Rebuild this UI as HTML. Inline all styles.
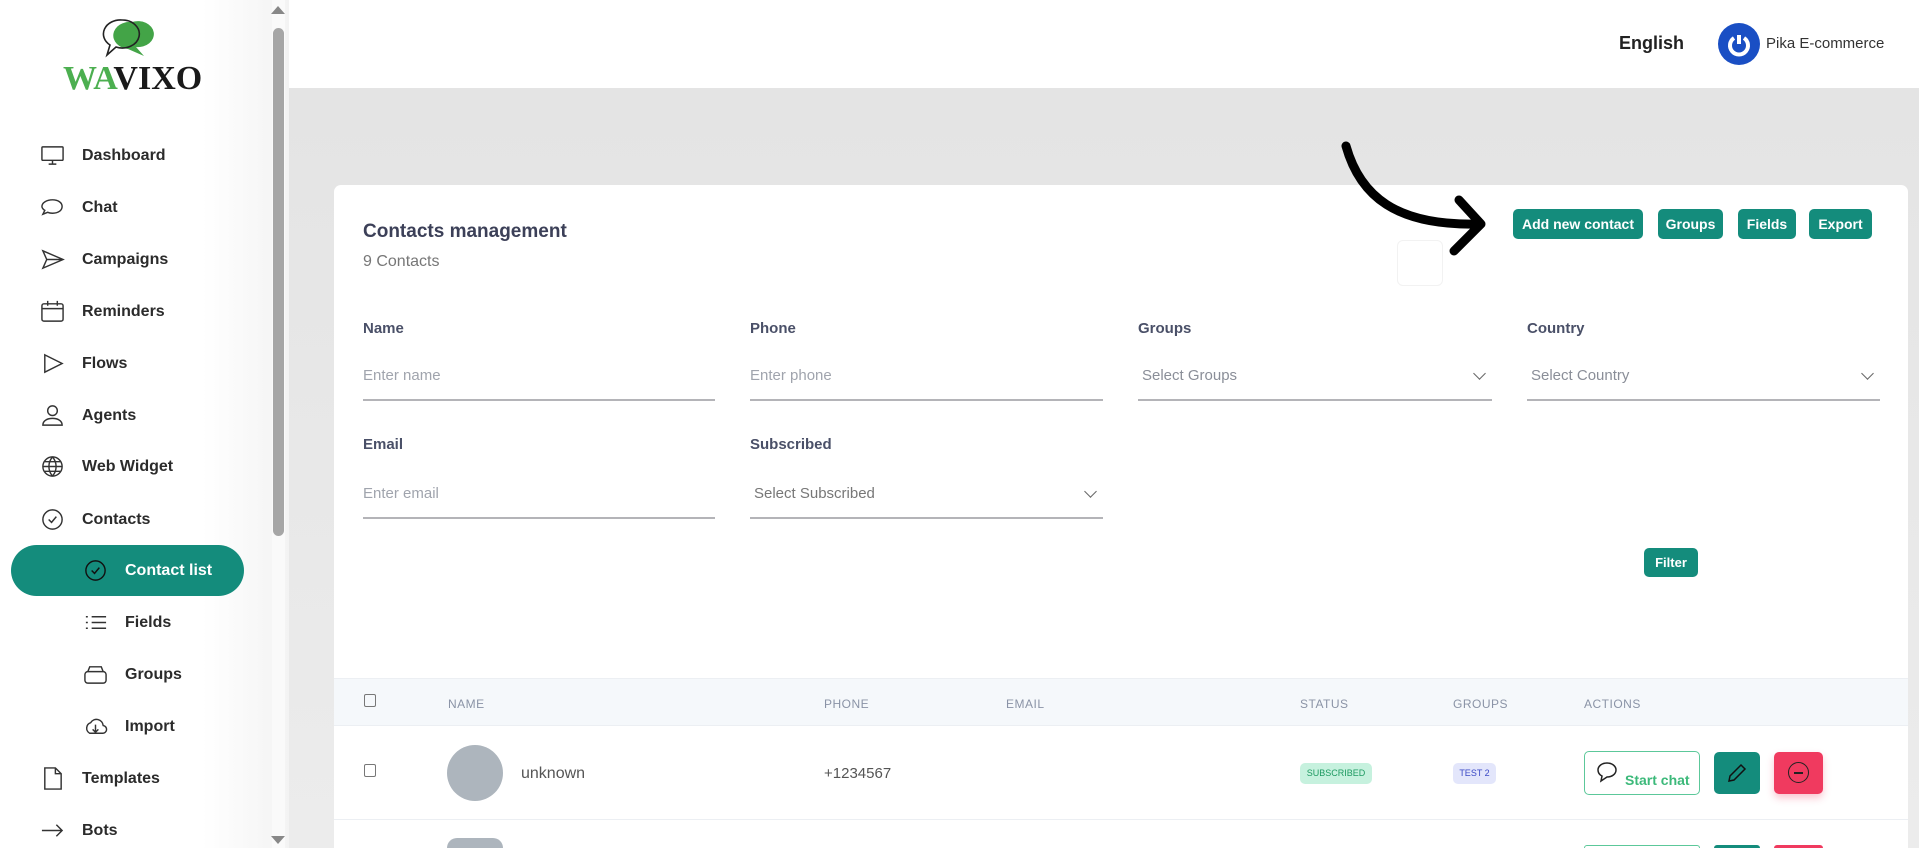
<!DOCTYPE html>
<html style="overflow:hidden;height:848px"><head><meta charset="utf-8"><style>
*{box-sizing:border-box;margin:0;padding:0}
body{width:1919px;height:848px;overflow:hidden;font-family:"Liberation Sans",sans-serif;background:#fff;position:relative}
#wrap{position:absolute;left:0;top:0;width:1919px;height:848px;overflow:hidden}
.abs{position:absolute}
#side{left:0;top:0;width:289px;height:848px;background:linear-gradient(90deg,#fff 70%,#f3f3f3);}
.nav{position:absolute;left:40px;font-size:16px;font-weight:bold;color:#2b2b2b;display:flex;align-items:center}
.nav svg{width:25px;height:25px;margin-right:17px;fill:none;stroke:#333;stroke-width:1.5}
.sub{left:83px}
#main{left:289px;top:88px;width:1630px;height:760px;background:linear-gradient(180deg,#e4e4e4,#ececec)}
#card{left:334px;top:185px;width:1574px;height:680px;background:#fff;border-radius:7px}
.btn{position:absolute;background:#148c7c;color:#fff;font-size:14px;font-weight:bold;border-radius:5px;text-align:center;line-height:30px;height:30px;top:209px}
.lbl{position:absolute;font-size:15px;color:#4a5068;font-weight:bold}
.inp{position:absolute;font-size:15px;color:#a0a4ad;border-bottom:2px solid #b4b4b8;height:44px;padding-top:10px}
.chev{position:absolute;right:8px;top:12px;width:9px;height:9px;border-right:1.5px solid #666;border-bottom:1.5px solid #666;transform:rotate(45deg)}
.th{position:absolute;top:697px;font-size:12px;color:#8a93a6;letter-spacing:.5px}
</style></head><body><div id="wrap">
<div id="side" class="abs">
<svg class="abs" style="left:96px;top:16px" width="70" height="50" viewBox="0 0 70 50"><path d="M36 6 a16 13 0 1 1 4 25 l8 9 -16-7 a16 13 0 0 1 4-27z" fill="#43a447"/><path d="M26 4 a17 14 0 1 1 -6 27 l-9 8 3-10 a17 14 0 0 1 12-25z" fill="none" stroke="#222" stroke-width="1.6"/></svg>
<div class="abs" style="left:63px;top:60px;font-family:'Liberation Serif',serif;font-size:34px;font-weight:bold"><span style="color:#4caf50">WA</span><span style="color:#1a1a1a">VIXO</span></div>
<div class="nav" style="top:143px"><svg viewBox="0 0 26 26"><rect x="2" y="4" width="22" height="14" rx="1"/><path d="M9 22h8M13 18v4"/></svg>Dashboard</div>
<div class="nav" style="top:195px"><svg viewBox="0 0 26 26"><path d="M13 5c6 0 10 3 10 7s-4 7-10 7c-2 0-3 0-5-1l-5 2 2-4c-2-1-3-3-3-4 0-4 5-7 11-7z"/></svg>Chat</div>
<div class="nav" style="top:247px"><svg viewBox="0 0 26 26"><path d="M3 4l21 9-21 9 4-9zM7 13h17"/></svg>Campaigns</div>
<div class="nav" style="top:299px"><svg viewBox="0 0 26 26"><rect x="2" y="5" width="22" height="18" rx="2"/><path d="M2 10h22M8 2v5M18 2v5"/></svg>Reminders</div>
<div class="nav" style="top:351px"><svg viewBox="0 0 26 26"><path d="M5 4l18 9-18 9z"/></svg>Flows</div>
<div class="nav" style="top:403px"><svg viewBox="0 0 26 26"><circle cx="13" cy="8" r="5"/><path d="M3 23c0-5 5-7 10-7s10 2 10 7z"/></svg>Agents</div>
<div class="nav" style="top:454px"><svg viewBox="0 0 26 26"><circle cx="13" cy="13" r="10"/><path d="M3 13h20M13 3c-5 6-5 14 0 20M13 3c5 6 5 14 0 20M5 8h16M5 18h16"/></svg>Web Widget</div>
<div class="nav" style="top:507px"><svg viewBox="0 0 26 26"><circle cx="13" cy="13" r="10"/><path d="M9 13l3 3 5-6"/></svg>Contacts</div>
<div class="abs" style="left:11px;top:545px;width:233px;height:51px;background:#148c7c;border-radius:26px"></div>
<div class="nav sub" style="top:558px;color:#fff"><svg viewBox="0 0 26 26" style="stroke:#111"><circle cx="13" cy="13" r="10"/><path d="M9 13l3 3 5-6"/></svg>Contact list</div>
<div class="nav sub" style="top:610px"><svg viewBox="0 0 26 26"><path d="M9 7h15M9 13h15M9 19h15M3 7h2M3 13h2M3 19h2"/></svg>Fields</div>
<div class="nav sub" style="top:662px"><svg viewBox="0 0 26 26"><rect x="2" y="10" width="22" height="12" rx="3"/><path d="M5 10l2-5h12l2 5"/></svg>Groups</div>
<div class="nav sub" style="top:714px"><svg viewBox="0 0 26 26"><path d="M7 20a6 6 0 0 1 1-11 7 7 0 0 1 13 3 4 4 0 0 1-1 8zM13 11v8M10 16l3 3 3-3"/></svg>Import</div>
<div class="nav" style="top:766px"><svg viewBox="0 0 26 26"><path d="M5 2h11l6 6v16H5zM16 2v6h6"/></svg>Templates</div>
<div class="nav" style="top:818px"><svg viewBox="0 0 26 26"><path d="M2 13h21M17 7l6 6-6 6"/></svg>Bots</div>
</div>
<div class="abs" style="left:272px;top:0;width:13px;height:848px;background:#fafafa"></div>
<div class="abs" style="left:273px;top:28px;width:11px;height:508px;background:#a6a6a6;border-radius:6px"></div>
<div class="abs" style="left:271px;top:6px;border:7px solid transparent;border-bottom:8px solid #888;border-top:0"></div>
<div class="abs" style="left:271px;top:836px;border:7px solid transparent;border-top:8px solid #888;border-bottom:0"></div>

<div class="abs" style="left:1619px;top:33px;font-size:18px;font-weight:bold;color:#222">English</div>
<div class="abs" style="left:1718px;top:23px;width:42px;height:42px;border-radius:50%;background:#1a4fc4"></div>
<svg class="abs" style="left:1725px;top:30px" width="28" height="28" viewBox="0 0 28 28"><path d="M9 8a9 9 0 1 0 10 0" fill="none" stroke="#fff" stroke-width="4"/><path d="M14 5v9" stroke="#fff" stroke-width="4"/></svg>
<div class="abs" style="left:1766px;top:35px;font-size:15px;color:#333">Pika E-commerce</div>

<div id="main" class="abs"></div>
<div id="card" class="abs"></div>
<div class="abs" style="left:363px;top:221px;font-size:19px;font-weight:bold;color:#3c4058">Contacts management</div>
<div class="abs" style="left:363px;top:253px;font-size:16px;color:#777">9 Contacts</div>
<div class="abs" style="left:1397px;top:240px;width:46px;height:46px;border:1px solid #f2f2f2;border-radius:6px"></div>
<div class="btn" style="left:1513px;width:130px">Add new contact</div>
<div class="btn" style="left:1658px;width:65px">Groups</div>
<div class="btn" style="left:1738px;width:58px">Fields</div>
<div class="btn" style="left:1809px;width:63px">Export</div>
<svg class="abs" style="left:1330px;top:130px" width="170" height="140" viewBox="1330 130 170 140"><path d="M1346 146c14 50 50 80 132 78M1459 200l22 24-27 27" fill="none" stroke="#000" stroke-width="9" stroke-linecap="round" stroke-linejoin="round"/></svg>

<div class="lbl" style="left:363px;top:320px">Name</div>
<div class="lbl" style="left:750px;top:320px">Phone</div>
<div class="lbl" style="left:1138px;top:320px">Groups</div>
<div class="lbl" style="left:1527px;top:320px">Country</div>
<div class="inp" style="left:363px;top:357px;width:352px">Enter name</div>
<div class="inp" style="left:750px;top:357px;width:353px">Enter phone</div>
<div class="inp" style="left:1138px;top:357px;width:354px;padding-left:4px;color:#8a8e98">Select Groups<span class="chev"></span></div>
<div class="inp" style="left:1527px;top:357px;width:353px;padding-left:4px;color:#8a8e98">Select Country<span class="chev"></span></div>
<div class="lbl" style="left:363px;top:436px">Email</div>
<div class="lbl" style="left:750px;top:436px">Subscribed</div>
<div class="inp" style="left:363px;top:475px;width:352px">Enter email</div>
<div class="inp" style="left:750px;top:475px;width:353px;padding-left:4px;color:#777">Select Subscribed<span class="chev"></span></div>
<div class="btn" style="left:1644px;top:548px;width:54px;height:29px;line-height:29px;font-size:13px">Filter</div>

<div class="abs" style="left:334px;top:678px;width:1574px;height:48px;background:#f5f8fb;border-top:1px solid #eceff3;border-bottom:1px solid #eceff3"></div>
<div class="abs" style="left:364px;top:694px;width:12px;height:13px;border:1px solid #777;border-radius:2px"></div>
<div class="th" style="left:448px">NAME</div>
<div class="th" style="left:824px">PHONE</div>
<div class="th" style="left:1006px">EMAIL</div>
<div class="th" style="left:1300px">STATUS</div>
<div class="th" style="left:1453px">GROUPS</div>
<div class="th" style="left:1584px">ACTIONS</div>

<div class="abs" style="left:364px;top:764px;width:12px;height:13px;border:1px solid #777;border-radius:2px"></div>
<div class="abs" style="left:447px;top:745px;width:56px;height:56px;border-radius:50%;background:#adb5bd"></div>
<div class="abs" style="left:521px;top:765px;font-size:16px;color:#555">unknown</div>
<div class="abs" style="left:824px;top:765px;font-size:15px;color:#555">+1234567</div>
<div class="abs" style="left:1300px;top:763px;width:72px;height:21px;border-radius:5px;background:#c6f1de;color:#1f9a62;font-size:9px;line-height:21px;text-align:center">SUBSCRIBED</div>
<div class="abs" style="left:1453px;top:763px;width:43px;height:21px;border-radius:5px;background:#e3e6fb;color:#3b49c5;font-size:9px;line-height:21px;text-align:center">TEST 2</div>
<div class="abs" style="left:1584px;top:751px;width:116px;height:44px;border:1px solid #5cc89a;border-radius:5px"></div>
<svg class="abs" style="left:1595px;top:760px" width="24" height="24" viewBox="0 0 24 24"><path d="M12 3c5 0 9 3 9 7s-4 7-9 7l-6 4 1-5c-2-1-4-3-4-6 0-4 4-7 9-7z" fill="none" stroke="#222" stroke-width="1.5"/></svg>
<div class="abs" style="left:1625px;top:772px;font-size:14px;font-weight:bold;color:#3cb97a">Start chat</div>
<div class="abs" style="left:1714px;top:752px;width:46px;height:42px;border-radius:5px;background:#148c7c"></div>
<svg class="abs" style="left:1725px;top:761px" width="24" height="24" viewBox="0 0 24 24"><path d="M4 20l1-5L16 4l4 4L9 19z" fill="none" stroke="#111" stroke-width="1.5"/></svg>
<div class="abs" style="left:1774px;top:752px;width:49px;height:42px;border-radius:5px;background:#f03a5f;box-shadow:0 4px 8px rgba(240,58,95,.3)"></div>
<div class="abs" style="left:1788px;top:762px;width:21px;height:21px;border-radius:50%;border:1.5px solid #222"></div>
<div class="abs" style="left:1794px;top:772px;width:9px;height:1.5px;background:#222"></div>
<div class="abs" style="left:334px;top:819px;width:1574px;height:1px;background:#eceff3"></div>
<div class="abs" style="left:447px;top:838px;width:56px;height:10px;border-radius:28px 28px 0 0;background:#adb5bd"></div>
<div class="abs" style="left:1584px;top:845px;width:116px;height:3px;border:1px solid #5cc89a;border-bottom:0;border-radius:5px 5px 0 0"></div>
<div class="abs" style="left:1714px;top:845px;width:46px;height:3px;border-radius:5px 5px 0 0;background:#148c7c"></div>
<div class="abs" style="left:1774px;top:845px;width:49px;height:3px;border-radius:5px 5px 0 0;background:#f03a5f"></div>
</div></body></html>
